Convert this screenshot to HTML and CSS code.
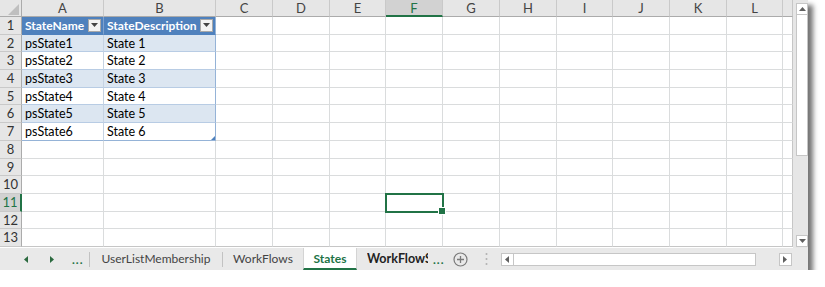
FILE: index.html
```html
<!DOCTYPE html>
<html lang="en">
<head>
    <meta charset="UTF-8">
    <title>States - Excel</title>
    <link rel="stylesheet" href="styles.css">
</head>
<body>
    <div class="window">
        <div class="main">
            <div class="sheet">
                <div class="row colheads">
                    <div class="corner">
                        <svg width="21" height="16" viewBox="0 0 21 16"><polygon points="8,15 19,15 19,4" fill="#bfbfbf"/></svg>
                    </div>
                    <div>A</div><div>B</div><div>C</div><div>D</div><div>E</div>
                    <div class="sel">F</div><div>G</div><div>H</div><div>I</div><div>J</div>
                    <div>K</div><div>L</div><div></div>
                </div>

                <div class="row">
                    <div class="rh">1</div>
                    <div class="th">StateName<span class="dd"><svg width="7" height="4" viewBox="0 0 7 4"><polygon points="0,0 7,0 3.5,4" fill="#444"/></svg></span></div>
                    <div class="th last">StateDescription<span class="dd"><svg width="7" height="4" viewBox="0 0 7 4"><polygon points="0,0 7,0 3.5,4" fill="#444"/></svg></span></div>
                    <div></div><div></div><div></div><div></div><div></div><div></div><div></div><div></div><div></div><div></div><div></div>
                </div>
                <div class="row">
                    <div class="rh">2</div>
                    <div class="tc band">psState1</div>
                    <div class="tc band last">State 1</div>
                    <div></div><div></div><div></div><div></div><div></div><div></div><div></div><div></div><div></div><div></div><div></div>
                </div>
                <div class="row">
                    <div class="rh">3</div>
                    <div class="tc">psState2</div>
                    <div class="tc last">State 2</div>
                    <div></div><div></div><div></div><div></div><div></div><div></div><div></div><div></div><div></div><div></div><div></div>
                </div>
                <div class="row">
                    <div class="rh">4</div>
                    <div class="tc band">psState3</div>
                    <div class="tc band last">State 3</div>
                    <div></div><div></div><div></div><div></div><div></div><div></div><div></div><div></div><div></div><div></div><div></div>
                </div>
                <div class="row">
                    <div class="rh">5</div>
                    <div class="tc">psState4</div>
                    <div class="tc last">State 4</div>
                    <div></div><div></div><div></div><div></div><div></div><div></div><div></div><div></div><div></div><div></div><div></div>
                </div>
                <div class="row">
                    <div class="rh">6</div>
                    <div class="tc band">psState5</div>
                    <div class="tc band last">State 5</div>
                    <div></div><div></div><div></div><div></div><div></div><div></div><div></div><div></div><div></div><div></div><div></div>
                </div>
                <div class="row">
                    <div class="rh">7</div>
                    <div class="tc bottom">psState6</div>
                    <div class="tc bottom last resize">State 6</div>
                    <div></div><div></div><div></div><div></div><div></div><div></div><div></div><div></div><div></div><div></div><div></div>
                </div>
                <div class="row">
                    <div class="rh">8</div>
                    <div></div><div></div><div></div><div></div><div></div><div></div><div></div><div></div><div></div><div></div><div></div><div></div><div></div>
                </div>
                <div class="row">
                    <div class="rh">9</div>
                    <div></div><div></div><div></div><div></div><div></div><div></div><div></div><div></div><div></div><div></div><div></div><div></div><div></div>
                </div>
                <div class="row">
                    <div class="rh">10</div>
                    <div></div><div></div><div></div><div></div><div></div><div></div><div></div><div></div><div></div><div></div><div></div><div></div><div></div>
                </div>
                <div class="row">
                    <div class="rh sel">11</div>
                    <div></div><div></div><div></div><div></div><div></div>
                    <div class="active"></div>
                    <div></div><div></div><div></div><div></div><div></div><div></div><div></div>
                </div>
                <div class="row">
                    <div class="rh">12</div>
                    <div></div><div></div><div></div><div></div><div></div><div></div><div></div><div></div><div></div><div></div><div></div><div></div><div></div>
                </div>
                <div class="row last-row">
                    <div class="rh">13</div>
                    <div></div><div></div><div></div><div></div><div></div><div></div><div></div><div></div><div></div><div></div><div></div><div></div><div></div>
                </div>
            </div>

            <div class="vscroll">
                <div class="sbtn"><svg width="7" height="4" viewBox="0 0 7 4"><polygon points="0,4 7,4 3.5,0" fill="#606060"/></svg></div>
                <div class="vthumb"></div>
                <div class="sbtn down"><svg width="7" height="4" viewBox="0 0 7 4"><polygon points="0,0 7,0 3.5,4" fill="#606060"/></svg></div>
            </div>
        </div>

        <div class="tabbar">
            <div class="nav">
                <svg class="arrow" width="4" height="7" viewBox="0 0 4 7"><polygon points="4,0 4,7 0,3.5" fill="#2b6a3f"/></svg>
                <svg class="arrow right" width="4" height="7" viewBox="0 0 4 7"><polygon points="0,0 0,7 4,3.5" fill="#2b6a3f"/></svg>
                <span class="more">...</span>
            </div>
            <div class="sep"></div>
            <div class="tab users">UserListMembership</div>
            <div class="sep"></div>
            <div class="tab flows">WorkFlows</div>
            <div class="tab current">States</div>
            <div class="tab clipped"><span>WorkFlowStates</span></div>
            <span class="more bold">...</span>
            <div class="add">
                <svg width="15" height="15" viewBox="0 0 15 15"><circle cx="7.5" cy="7.5" r="6.5" fill="none" stroke="#7a7a7a" stroke-width="1.2"/><path d="M7.5 4v7M4 7.5h7" stroke="#7a7a7a" stroke-width="1.3"/></svg>
            </div>
            <div class="grip">
                <svg width="3" height="14" viewBox="0 0 3 14"><circle cx="1.5" cy="2" r="1" fill="#b0b0b0"/><circle cx="1.5" cy="7" r="1" fill="#b0b0b0"/><circle cx="1.5" cy="12" r="1" fill="#b0b0b0"/></svg>
            </div>
            <div class="hscroll">
                <div class="sbtn"><svg width="4" height="7" viewBox="0 0 4 7"><polygon points="4,0 4,7 0,3.5" fill="#606060"/></svg></div>
                <div class="hthumb"></div>
                <div class="sbtn right"><svg width="4" height="7" viewBox="0 0 4 7"><polygon points="0,0 0,7 4,3.5" fill="#606060"/></svg></div>
            </div>
        </div>
    </div>
</body>
</html>
```

FILE: styles.css
```css
* {
    box-sizing: border-box;
}
body {
    margin: 0;
    background-color: #fff;
    font-family: Lato, 'Liberation Sans', sans-serif;
}
.window {
    width: 808px;
    height: 270px;
    background-color: #e6e6e6;
    box-shadow: 5px 5px 5px rgba(0,0,0,0.55);
    display: flex;
    flex-direction: column;
}
.main {
    display: flex;
    height: 248px;
}
.sheet {
    width: 793px;
    overflow: hidden;
    background-color: #fff;
}

/* grid rows */
.row {
    display: grid;
    grid-template-columns: 22px 82px 112px 57px 57px 56px 57px 57px 57px 56px 57px 57px 56px 1fr;
    height: 17.7px;
}
.row > div {
    border-right: 1px solid #dadcdd;
    border-bottom: 1px solid #dadcdd;
    font-size: 12.5px;
    line-height: 17px;
    padding-left: 3px;
    white-space: nowrap;
    overflow: hidden;
    color: #000;
}
.row > div:last-child {
    border-right-color: #c6c6c6;
}
.last-row > div {
    border-bottom-color: #c6c6c6;
}

/* column headers */
.colheads {
    height: 17px;
    background-color: #e6e6e6;
}
.colheads > div {
    padding: 0;
    text-align: center;
    color: #444;
    font-size: 13px;
    line-height: 16px;
    border-right-color: #c9c9c9;
    border-bottom-color: #ababab;
}
.colheads .corner {
    border-right-color: #ababab;
}
.corner svg {
    display: block;
}
.colheads .sel {
    background-color: #d2d2d2;
    color: #217346;
    border-bottom: 2px solid #217346;
}

/* row headers */
.row > .rh {
    background-color: #e6e6e6;
    color: #333;
    font-size: 13px;
    text-align: center;
    padding: 0;
    border-right-color: #ababab;
    border-bottom-color: #c9c9c9;
}
.row > .rh.sel {
    background-color: #d2d2d2;
    color: #217346;
    border-right: 2px solid #217346;
}

/* table */
.row > .th {
    background-color: #4f81bd;
    color: #fff;
    font-size: 12px;
    font-weight: bold;
    display: flex;
    align-items: center;
    border-right-color: #7fa2cf;
    border-bottom-color: #4f81bd;
}
.dd {
    margin-left: auto;
    margin-right: 2px;
    width: 13px;
    height: 13px;
    flex-shrink: 0;
    background-color: #f3f3f3;
    border: 1px solid #a8a8a8;
    display: flex;
    align-items: center;
    justify-content: center;
}
.row > .tc {
    border-bottom-color: #b8cce4;
    border-right-color: #c6d3e3;
}
.row > .band {
    background-color: #dce6f1;
}
.row > .last {
    border-right-color: #95b3d7;
}
.row > .bottom {
    border-bottom-color: #95b3d7;
}
.resize {
    position: relative;
}
.resize::after {
    content: "";
    position: absolute;
    right: 0;
    bottom: 0;
    border-left: 4px solid transparent;
    border-bottom: 4px solid #4f81bd;
}

/* selected cell */
.row > .active {
    position: relative;
    z-index: 1;
    overflow: visible;
    outline: 2px solid #217346;
    outline-offset: -1px;
}
.active::after {
    content: "";
    position: absolute;
    right: -4px;
    bottom: -4px;
    width: 6px;
    height: 6px;
    background-color: #217346;
    border: 1px solid #fff;
}

/* scrollbars */
.vscroll {
    width: 15px;
    padding: 3px 0 0 3px;
    display: flex;
    flex-direction: column;
}
.sbtn {
    width: 12px;
    height: 12px;
    background-color: #fff;
    border: 1px solid #c6c6c6;
    display: flex;
    align-items: center;
    justify-content: center;
    flex-shrink: 0;
}
.vthumb {
    height: 141px;
    background-color: #fff;
    border: 1px solid #c6c6c6;
    border-top: none;
}
.vscroll .down {
    margin-top: auto;
    margin-bottom: 1px;
}

/* sheet tabs */
.tabbar {
    height: 22px;
    display: flex;
    align-items: center;
    font-size: 12px;
    color: #444;
    background-color: #e9e9e9;
}
.nav {
    width: 89px;
    display: flex;
    align-items: center;
    padding-left: 24px;
}
.arrow.right {
    margin-left: 22px;
}
.more {
    color: #217346;
    font-weight: bold;
    letter-spacing: 1px;
}
.nav .more {
    margin-left: 18px;
}
.sep {
    width: 1px;
    height: 15px;
    background-color: #c2c2c2;
}
.tab {
    height: 22px;
    line-height: 21px;
    text-align: center;
    white-space: nowrap;
}
.users {
    width: 132px;
}
.flows {
    width: 80px;
}
.current {
    width: 54px;
    background-color: #fff;
    color: #217346;
    font-weight: bold;
    border-bottom: 2px solid #217346;
    border-left: 1px solid #d4d4d4;
    border-right: 1px solid #d4d4d4;
}
.clipped {
    width: 71px;
    padding-left: 10px;
    text-align: left;
    font-size: 12.5px;
    font-weight: bold;
    color: #222;
}
.clipped span {
    display: block;
    width: 61px;
    overflow: hidden;
}
.tabbar .more.bold {
    margin-left: 5px;
}
.add {
    margin-left: 8px;
    display: flex;
}
.grip {
    margin-left: 17px;
    display: flex;
}
.hscroll {
    margin-left: 13px;
    width: 291px;
    height: 13px;
    display: flex;
}
.hscroll .sbtn {
    height: 13px;
    width: 13px;
}
.hthumb {
    width: 242px;
    background-color: #fff;
    border: 1px solid #c6c6c6;
    border-left: none;
}
.hscroll .right {
    margin-left: auto;
}
```
